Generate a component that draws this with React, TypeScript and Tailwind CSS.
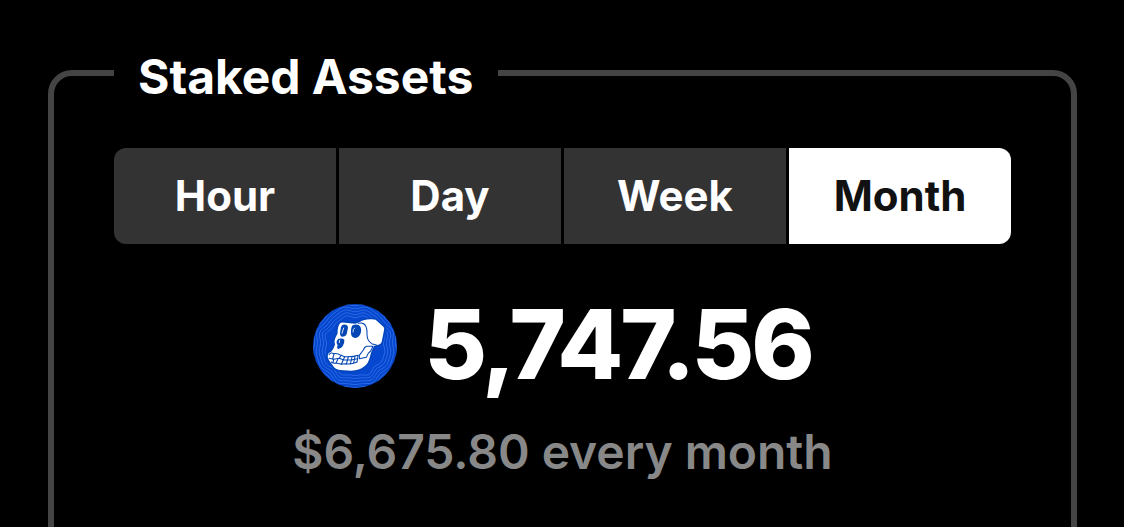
import { useState } from "react";

const periods = ["Hour", "Day", "Week", "Month"];

// Closed wavy ring around the middle of the coin, dipping at the top
function ring(radius: number) {
  const points: string[] = [];
  for (let deg = 0; deg < 360; deg += 4) {
    const a = (deg * Math.PI) / 180;
    const r = radius - 3.5 * Math.cos(8 * a) + 2 * Math.sin(13 * a);
    points.push(
      `${(150 + r * Math.cos(a)).toFixed(1)} ${(150 + r * Math.sin(a)).toFixed(1)}`
    );
  }
  return `M${points.join("L")}Z`;
}

const rings = [90, 99, 108, 117, 126];

function ApeCoin() {
  return (
    <svg className="size-[84px] shrink-0" viewBox="24 24 252 252" fill="none">
      <defs>
        <clipPath id="coin">
          <circle cx="150" cy="150" r="126" />
        </clipPath>
      </defs>
      <g clipPath="url(#coin)">
        <rect x="24" y="24" width="252" height="252" fill="#0647cf" />
        {rings.map((r) => (
          <path key={r} d={ring(r)} stroke="#3f7df2" strokeWidth="2" />
        ))}
      </g>
      <path
        d="M104 83 Q108 78 120 80 L150 83 Q158 82 164 78 Q178 69 200 70 L212 71 L235 92 Q239 96 237 103 L230 138 Q227 146 218 147 L207 150 Q203 158 198 170 L194 185 Q190 202 178 211 Q163 224 139 224 L105 222 Q91 220 84 209 L72 193 Q66 183 69 174 Q72 169 78 168 L85 158 L90 146 Q86 136 91 126 L98 112 Q97 94 104 83Z"
        fill="#fff"
        stroke="#0346bc"
        strokeWidth="10"
        paintOrder="stroke"
      />
      <g fill="#0346b4">
        <path d="M114 86 Q128 84 129 95 L125 115 Q122 123 110 122 Q104 120 105 112 L108 94 Q109 88 114 86Z" />
        <path d="M143 88 Q155 83 164 89 Q171 97 167 112 Q163 124 151 126 Q138 124 138 111 Q137 95 143 88Z" />
        <path d="M101 128 Q114 126 118 131 Q119 142 113 151 Q107 159 100 159 Q94 157 98 148 Q92 139 97 132Z" />
      </g>
      <g stroke="#fff" strokeWidth="2.5" strokeLinecap="round">
        <path d="M111 112 L116 96" />
        <path d="M144 108 Q143 99 149 96" />
        <path d="M103 140 L104 133" />
      </g>
      <g stroke="#0346b4" strokeWidth="3.2" strokeLinejoin="round" strokeLinecap="round">
        <path d="M160 82 Q176 78 182 90 Q187 99 186 117 Q187 135 200 143 L216 148" />
        <path d="M185 151 Q178 153 175 162 L163 178 L163 188 L184 184 Q188 171 197 165 L204 151 Z" />
        <path d="M72 176 Q77 168 87 173 Q97 171 108 178 L119 182 Q140 184 160 178" />
        <path d="M73 187 L86 190 L103 187 L116 192 L138 192 L158 188" />
        <path d="M79 198 Q86 204 94 201 L109 205 L118 203 Q140 206 156 198" />
        <path d="M87 173 L83 189 M108 178 L103 187 M86 190 L84 200 M99 189 L93 201 M119 182 L109 205 M130 183 L124 204 M141 183 L136 204 M150 181 L146 201 M159 179 L156 198" />
      </g>
    </svg>
  );
}

export default function App() {
  const [active, setActive] = useState("Month");

  return (
    <main className="h-[527px] overflow-hidden bg-black pt-[43px] pr-[47px] pl-12 font-['Inter',sans-serif] text-white">
      <fieldset className="h-[600px] rounded-[24px] border-[6px] border-[#444] px-[60px]">
        <legend className="w-[384px] px-6 pt-2 text-[48px] leading-[52px] font-bold tracking-[-0.001em] whitespace-nowrap">
          Staked Assets
        </legend>

        <div className="mt-[45px] grid grid-cols-4 gap-[3px] overflow-hidden rounded-xl">
          {periods.map((period) => (
            <button
              key={period}
              onClick={() => setActive(period)}
              className={
                period === active
                  ? "h-24 bg-white pb-px text-[42px] font-bold text-[#111]"
                  : "h-24 bg-[#333] pb-px text-[42px] font-bold text-white"
              }
            >
              {period}
            </button>
          ))}
        </div>

        <div className="mt-[54px] flex h-[96px] items-center justify-center gap-[27px]">
          <ApeCoin />
          <span className="pb-1 text-[96px] leading-[96px] font-extrabold tracking-[-0.033em]">
            5,747.56
          </span>
        </div>

        <p className="mt-[28px] text-center text-[48px] leading-[60px] font-semibold tracking-[-0.001em] text-[#888]">
          $6,675.80 every month
        </p>
      </fieldset>
    </main>
  );
}
